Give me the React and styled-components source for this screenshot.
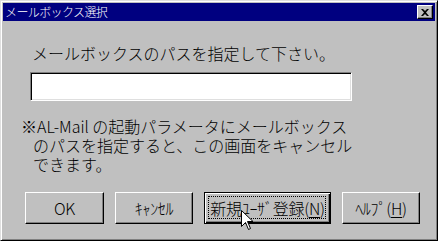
import React from 'react';
import styled, { createGlobalStyle } from 'styled-components';

const GlobalStyle = createGlobalStyle`
  html, body {
    margin: 0;
    padding: 0;
    background: #c0c0c0;
  }
  body {
    font-family: "Noto Sans CJK JP", "Noto Sans", sans-serif;
    font-weight: 300;
  }
`;

const Window = styled.div`
  position: relative;
  box-sizing: border-box;
  width: 438px;
  height: 241px;
  background: #c0c0c0;
  border-top: 1px solid #dfdfdf;
  border-left: 1px solid #dfdfdf;
  border-right: 1px solid #000;
  border-bottom: 1px solid #000;
  box-shadow: inset 1px 1px #fff, inset -1px -1px #808080;
  padding: 2px;
  display: flex;
  flex-direction: column;
`;

const TitleBar = styled.div`
  height: 18px;
  background: #000080;
  display: flex;
  align-items: center;
  justify-content: space-between;
  padding: 0 2px;
`;

const Title = styled.span`
  color: #fff;
  font-size: 12px;
  line-height: 18px;
  letter-spacing: -0.6px;
`;

const CloseButton = styled.div`
  box-sizing: border-box;
  width: 16px;
  height: 14px;
  background: #c0c0c0;
  border-top: 1px solid #fff;
  border-left: 1px solid #fff;
  border-right: 1px solid #000;
  border-bottom: 1px solid #000;
  box-shadow: inset -1px -1px #808080;
  display: flex;
  align-items: center;
  justify-content: center;
`;

const Body = styled.div`
  flex: 1;
  display: flex;
  flex-direction: column;
  color: #000;
  font-size: 16px;
  line-height: 19px;
`;

const Prompt = styled.div`
  margin: 23px 0 0 29px;
  height: 19px;
`;

const PathInput = styled.div`
  box-sizing: border-box;
  width: 322px;
  height: 29px;
  margin: 9px 0 0 27px;
  background: #fff;
  border-top: 1px solid #808080;
  border-left: 1px solid #808080;
  border-right: 1px solid #fff;
  border-bottom: 1px solid #fff;
  box-shadow: inset 1px 1px #000, inset -1px -1px #dfdfdf;
`;

const Note = styled.div`
  margin: 16px 0 0 0;
  display: flex;
  flex-direction: column;
`;

const NoteLine = styled.div`
  height: 19px;
  padding-left: ${p => (p.$indent ? 30 : 18)}px;
  white-space: nowrap;
`;

const ButtonRow = styled.div`
  display: flex;
  gap: 11px;
  margin: 18px 0 0 22px;
`;

const Button = styled.div`
  position: relative;
  box-sizing: border-box;
  width: ${p => p.$width}px;
  height: 32px;
  background: #c0c0c0;
  display: flex;
  align-items: center;
  justify-content: center;
  font-size: 16px;
  letter-spacing: -0.3px;
  ${p =>
    p.$default
      ? `
    border: 1px solid #000;
    box-shadow: inset 1px 1px #fff, inset -1px -1px #000, inset -2px -2px #808080;
  `
      : `
    border-top: 1px solid #fff;
    border-left: 1px solid #fff;
    border-right: 1px solid #000;
    border-bottom: 1px solid #000;
    box-shadow: inset -1px -1px #808080;
  `}
`;

const FocusRing = styled.span`
  position: absolute;
  inset: 3px 4px 4px 3px;
  border: 1px dotted #000;
  pointer-events: none;
`;

const Key = styled.span`
  text-decoration: underline;
  text-underline-offset: 2px;
`;

const Cursor = styled.svg`
  position: absolute;
  left: 240px;
  top: 209px;
`;

export default function App() {
  return (
    <>
      <GlobalStyle />
      <Window>
        <TitleBar>
          <Title>メールボックス選択</Title>
          <CloseButton>
            <svg width="8" height="7" viewBox="0 0 8 7">
              <path d="M0 0h2l2 2 2-2h2L5 3.5 8 7H6L4 5 2 7H0l3-3.5z" fill="#000" />
            </svg>
          </CloseButton>
        </TitleBar>
        <Body>
          <Prompt>メールボックスのパスを指定して下さい。</Prompt>
          <PathInput />
          <Note>
            <NoteLine>※AL-Mail の起動パラメータにメールボックス</NoteLine>
            <NoteLine $indent>のパスを指定すると、この画面をキャンセル</NoteLine>
            <NoteLine $indent>できます。</NoteLine>
          </Note>
          <ButtonRow>
            <Button $width={79}>OK</Button>
            <Button $width={78}>ｷｬﾝｾﾙ</Button>
            <Button $width={127} $default>
              新規ﾕｰｻﾞ登録(<Key>N</Key>)
              <FocusRing />
            </Button>
            <Button $width={78}>
              ﾍﾙﾌﾟ(<Key>H</Key>)
            </Button>
          </ButtonRow>
        </Body>
        <Cursor width="13" height="21" viewBox="0 0 13 21">
          <path
            d="M0.5 0.5v16l4-4 3 7 2-1-3-7h5.5z"
            fill="#fff"
            stroke="#000"
            strokeWidth="1"
          />
        </Cursor>
      </Window>
    </>
  );
}
